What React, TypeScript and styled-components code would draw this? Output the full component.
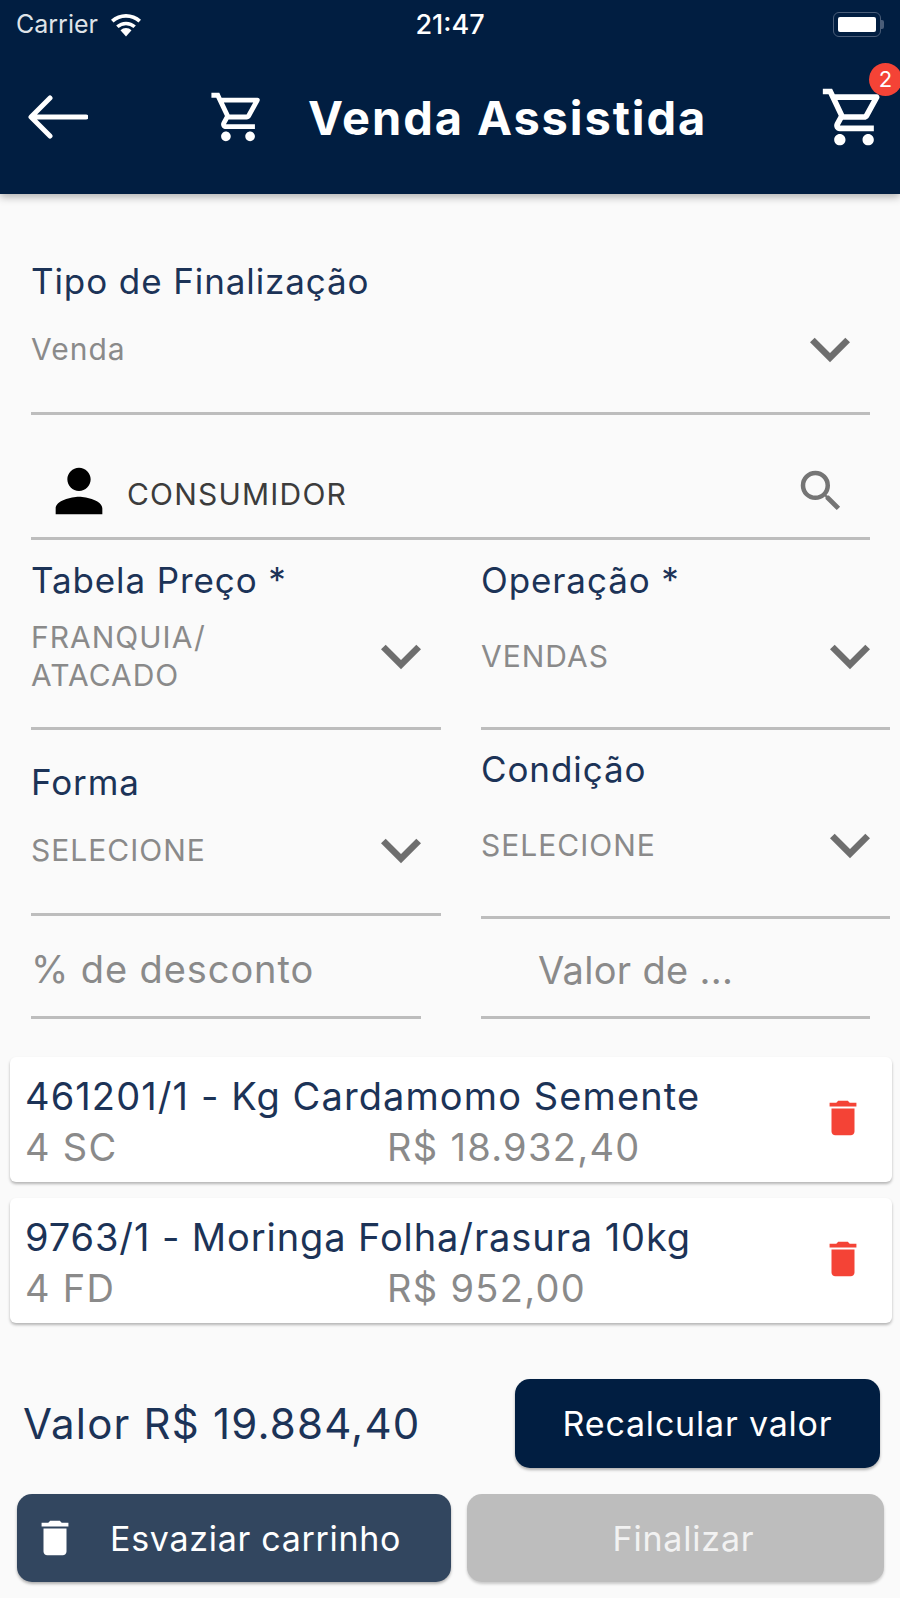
import { createGlobalStyle, styled } from 'styled-components';
import { MdDelete, MdKeyboardArrowDown, MdOutlineShoppingCart, MdPerson, MdSearch } from 'react-icons/md';

const NAVY = '#011e41';
const LABEL = '#1c3357';
const GREY = '#8a8a8a';
const LINE = '#bdbdbd';
const RED = '#f44336';

const items = [
  { title: '461201/1 - Kg Cardamomo Semente', qty: '4 SC', price: 'R$ 18.932,40', spacing: 1.1 },
  { title: '9763/1 - Moringa Folha/rasura 10kg', qty: '4 FD', price: 'R$ 952,00', spacing: 0.9 },
];

const App = () => {
  return (
    <>
      <GlobalStyle />
      <Page>
        <Header>
          <StatusBar>
            <Carrier>
              Carrier
              <svg width="36" height="27" viewBox="0 0 30 22" fill="#fff">
                <path d="M15 21l-4.6-5.2a6.6 6.6 0 0 1 9.2 0z" />
                <path d="M8.8 14a9.2 9.2 0 0 1 12.4 0l2-2.2a12.2 12.2 0 0 0-16.4 0z" />
                <path d="M4.6 9.4a15.2 15.2 0 0 1 20.8 0l2.1-2.3a18.4 18.4 0 0 0-25 0z" />
              </svg>
            </Carrier>
            <Clock>21:47</Clock>
            <Battery>
              <BatteryBody>
                <BatteryFill />
              </BatteryBody>
              <BatteryTip />
            </Battery>
          </StatusBar>
          <TopBar>
            <svg width="60" height="44" viewBox="0 0 60 44" fill="none" stroke="#fff" strokeWidth="5" strokeLinecap="round" strokeLinejoin="round">
              <path d="M58 22H4M22 3L3 22l19 19" />
            </svg>
            <TitleGroup>
              <MdOutlineShoppingCart size={58} />
              <Title>Venda Assistida</Title>
            </TitleGroup>
            <CartButton>
              <MdOutlineShoppingCart size={68} />
              <Badge>2</Badge>
            </CartButton>
          </TopBar>
        </Header>

        <Form>
          <Field $height={221} $paddingTop={67} $inset>
            <Label>Tipo de Finalização</Label>
            <SelectRow>
              <Value>Venda</Value>
              <Chevron size={80} />
            </SelectRow>
          </Field>

          <CustomerRow>
            <MdPerson size={70} color="#000" />
            <CustomerName>CONSUMIDOR</CustomerName>
            <MdSearch size={54} color="#757575" />
          </CustomerRow>

          <Columns>
            <Column>
              <Field $height={190} $paddingTop={20}>
                <Label>Tabela Preço *</Label>
                <SelectRow $offset={18}>
                  <Value>
                    FRANQUIA/
                    <br />
                    ATACADO
                  </Value>
                  <Chevron size={80} />
                </SelectRow>
              </Field>
              <Field $height={186} $paddingTop={32}>
                <Label>Forma</Label>
                <SelectRow>
                  <Value>SELECIONE</Value>
                  <Chevron size={80} />
                </SelectRow>
              </Field>
              <InputField $narrow>
                <Placeholder>% de desconto</Placeholder>
              </InputField>
            </Column>
            <Column>
              <Field $height={190} $paddingTop={20}>
                <Label>Operação *</Label>
                <SelectRow $offset={18}>
                  <Value>VENDAS</Value>
                  <Chevron size={80} />
                </SelectRow>
              </Field>
              <Field $height={189} $paddingTop={19}>
                <Label>Condição</Label>
                <SelectRow $offset={18}>
                  <Value>SELECIONE</Value>
                  <Chevron size={80} />
                </SelectRow>
              </Field>
              <InputField $indent $short>
                <Placeholder $tight>Valor de ...</Placeholder>
              </InputField>
            </Column>
          </Columns>
        </Form>

        <CartList>
          {items.map((item) => (
            <CartCard key={item.title}>
              <CardText>
                <CardTitle $spacing={item.spacing}>{item.title}</CardTitle>
                <CardMeta>
                  <Qty>{item.qty}</Qty>
                  <span>{item.price}</span>
                </CardMeta>
              </CardText>
              <DeleteIcon size={46} color={RED} />
            </CartCard>
          ))}
        </CartList>

        <TotalRow>
          <Total>Valor R$ 19.884,40</Total>
          <RecalcButton>Recalcular valor</RecalcButton>
        </TotalRow>

        <Actions>
          <ClearButton>
            <MdDelete size={46} color="#fff" />
            <span>Esvaziar carrinho</span>
          </ClearButton>
          <FinishButton>Finalizar</FinishButton>
        </Actions>
      </Page>
    </>
  );
};

const GlobalStyle = createGlobalStyle`
  html, body {
    margin: 0;
    padding: 0;
    background: #fafafa;
  }

  * {
    box-sizing: border-box;
  }
`;

const Page = styled.div`
  width: 900px;
  height: 1598px;
  overflow: hidden;
  background: #fafafa;
  font-family: Inter, 'Liberation Sans', sans-serif;
`;

const Header = styled.header`
  height: 194px;
  background: ${NAVY};
  box-shadow: 0 3px 8px rgba(0, 0, 0, 0.3);
  color: #fff;
`;

const StatusBar = styled.div`
  display: grid;
  grid-template-columns: 1fr auto 1fr;
  align-items: center;
  height: 48px;
  padding: 0 16px;
`;

const Carrier = styled.div`
  display: flex;
  align-items: center;
  gap: 10px;
  color: #dfe3e8;
  font-size: 25px;
`;

const Clock = styled.div`
  font-size: 27px;
  font-weight: 500;
`;

const Battery = styled.div`
  display: flex;
  align-items: center;
  justify-content: flex-end;
`;

const BatteryBody = styled.div`
  width: 48px;
  height: 25px;
  padding: 4px;
  border: 1.5px solid #4a5d78;
  border-radius: 6px;
`;

const BatteryFill = styled.div`
  height: 100%;
  background: #fff;
  border-radius: 2px;
`;

const BatteryTip = styled.div`
  width: 3px;
  height: 9px;
  background: #4a5d78;
  border-radius: 0 2px 2px 0;
`;

const TopBar = styled.div`
  display: flex;
  align-items: center;
  height: 146px;
  padding: 0 12px 8px 28px;
`;

const TitleGroup = styled.div`
  display: flex;
  flex: 1;
  align-items: center;
  gap: 41px;
  padding-left: 121px;
`;

const Title = styled.h1`
  margin: 0;
  font-size: 47px;
  font-weight: 700;
  letter-spacing: 1.9px;
`;

const CartButton = styled.div`
  position: relative;
  display: flex;
`;

const Badge = styled.span`
  position: absolute;
  top: -20px;
  right: -14px;
  width: 33px;
  height: 33px;
  border-radius: 50%;
  background: ${RED};
  color: #fff;
  font-size: 22px;
  line-height: 33px;
  text-align: center;
`;

const Form = styled.div`
  padding: 0 10px 0 31px;
`;

const Field = styled.div<{ $height: number; $paddingTop: number; $inset?: boolean }>`
  display: flex;
  flex-direction: column;
  height: ${(p) => p.$height}px;
  margin-right: ${(p) => (p.$inset ? 20 : 0)}px;
  padding-top: ${(p) => p.$paddingTop}px;
  border-bottom: 3px solid ${LINE};
`;

const Label = styled.div`
  color: ${LABEL};
  font-size: 35px;
  line-height: 40px;
  letter-spacing: 0.9px;
`;

const SelectRow = styled.div<{ $offset?: number }>`
  display: flex;
  align-items: center;
  justify-content: space-between;
  height: 76px;
  margin-top: ${(p) => p.$offset ?? 10}px;
`;

const Value = styled.div`
  color: ${GREY};
  font-size: 30px;
  line-height: 38px;
  letter-spacing: 1px;
`;

const Chevron = styled(MdKeyboardArrowDown)`
  flex: none;
  color: #6e6e6e;
`;

const CustomerRow = styled.div`
  display: flex;
  align-items: center;
  height: 125px;
  margin-right: 20px;
  padding: 30px 22px 0 13px;
  border-bottom: 3px solid ${LINE};
`;

const CustomerName = styled.div`
  flex: 1;
  margin-left: 13px;
  padding-top: 6px;
  color: #3c3c3c;
  font-size: 30px;
  letter-spacing: 1.2px;
`;

const Columns = styled.div`
  display: grid;
  grid-template-columns: 410px 409px;
  gap: 40px;
`;

const Column = styled.div`
  display: flex;
  flex-direction: column;
`;

const InputField = styled.div<{ $narrow?: boolean; $indent?: boolean; $short?: boolean }>`
  display: flex;
  align-items: center;
  height: ${(p) => (p.$short ? 100 : 103)}px;
  width: ${(p) => (p.$narrow ? 390 : 389)}px;
  padding: ${(p) => (p.$short ? 4 : 6)}px 0 0 ${(p) => (p.$indent ? 57 : 0)}px;
  border-bottom: 3px solid ${LINE};
`;

const Placeholder = styled.div<{ $tight?: boolean }>`
  color: ${GREY};
  font-size: 38px;
  letter-spacing: ${(p) => (p.$tight ? 0.3 : 0.9)}px;
`;

const CartList = styled.div`
  display: flex;
  flex-direction: column;
  gap: 16px;
  margin: 38px 8px 0 10px;
`;

const CartCard = styled.div`
  display: flex;
  align-items: center;
  justify-content: space-between;
  height: 125px;
  padding: 0 26px 0 15px;
  border-radius: 6px;
  background: #fff;
  box-shadow: 0 2px 3px rgba(0, 0, 0, 0.28);
`;

const DeleteIcon = styled(MdDelete)`
  margin-top: -4px;
`;

const CardText = styled.div`
  display: flex;
  flex-direction: column;
  padding-top: 4px;
`;

const CardTitle = styled.div<{ $spacing: number }>`
  color: ${LABEL};
  font-size: 38px;
  line-height: 51px;
  letter-spacing: ${(p) => p.$spacing}px;
`;

const CardMeta = styled.div`
  display: flex;
  color: ${GREY};
  font-size: 38px;
  line-height: 51px;
  letter-spacing: 1.3px;
`;

const Qty = styled.span`
  width: 362px;
`;

const TotalRow = styled.div`
  display: flex;
  align-items: center;
  justify-content: space-between;
  margin: 56px 20px 0 23px;
`;

const Total = styled.div`
  color: ${LABEL};
  font-size: 42px;
  letter-spacing: 1.2px;
`;

const RecalcButton = styled.button`
  width: 365px;
  height: 89px;
  padding: 0;
  border: none;
  border-radius: 15px;
  background: ${NAVY};
  box-shadow: 0 2px 3px rgba(0, 0, 0, 0.3);
  color: #fff;
  font-family: inherit;
  font-size: 34px;
  letter-spacing: 0.8px;
`;

const Actions = styled.div`
  display: grid;
  grid-template-columns: 434px 417px;
  gap: 16px;
  margin: 26px 16px 0 17px;
`;

const ClearButton = styled.button`
  display: flex;
  align-items: center;
  gap: 32px;
  height: 88px;
  padding: 0 0 0 15px;
  border: none;
  border-radius: 15px;
  background: #32465f;
  box-shadow: 0 2px 3px rgba(0, 0, 0, 0.3);
  color: #fff;
  font-family: inherit;
  font-size: 34px;
  letter-spacing: 0.7px;
`;

const FinishButton = styled.button`
  height: 88px;
  padding: 0 0 0 16px;
  border: none;
  border-radius: 15px;
  background: #bdbdbd;
  box-shadow: 0 2px 3px rgba(0, 0, 0, 0.2);
  color: #f2f2f2;
  font-family: inherit;
  font-size: 34px;
  letter-spacing: 0.8px;
`;

export default App;
